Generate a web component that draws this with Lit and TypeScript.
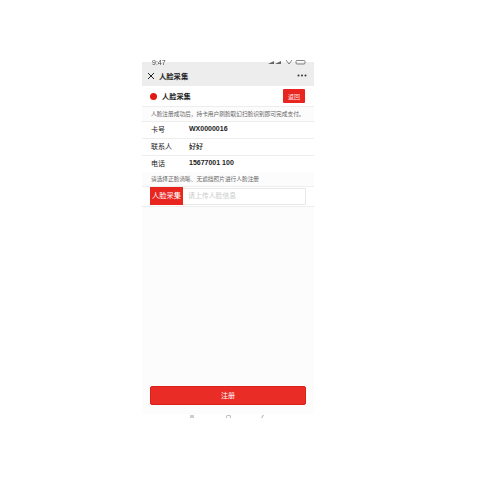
import { LitElement, html, css } from "lit";
import { customElement } from "lit/decorators.js";

@customElement("app-root")
export class AppRoot extends LitElement {
  static styles = css`
    :host {
      display: block;
      width: 480px;
      height: 480px;
      background: #fff;
      padding: 62px 0 0 142px;
      box-sizing: border-box;
      font-family: "Noto Sans CJK SC", "Liberation Sans", sans-serif;
      color: #222;
      overflow: hidden;
    }
    .phone {
      width: 172px;
      height: 356px;
      display: flex;
      flex-direction: column;
      background: #fcfcfc;
      filter: blur(0.3px);
    }
    .status {
      height: 3px;
      background: #ededed;
      position: relative;
      flex: none;
    }
    .time {
      position: absolute;
      left: 10px;
      top: -3px;
      font-size: 7px;
      line-height: 7px;
      color: #444;
      font-family: "Liberation Sans", sans-serif;
    }
    .sig {
      position: absolute;
      right: 8px;
      top: -3px;
      width: 38px;
      height: 6px;
      display: block;
    }
    .nav {
      height: 21px;
      background: #ededed;
      flex: none;
      display: flex;
      align-items: center;
      padding: 0 5px;
      gap: 4px;
      font-size: 7.3px;
      font-weight: 700;
      color: #222;
    }
    .nav svg.x { width: 8px; height: 8px; flex: none; }
    .nav .title { flex: 1; }
    .nav .dots { width: 10px; height: 3px; flex: none; margin-right: 2px; }
    .head {
      height: 21px;
      flex: none;
      background: #fff;
      display: flex;
      align-items: center;
      padding: 0 9px 0 8px;
      font-size: 7.2px;
      font-weight: 700;
      color: #222;
      border-bottom: 1px solid #eee;
      box-sizing: border-box;
    }
    .dot {
      width: 7px;
      height: 7px;
      border-radius: 50%;
      background: #e01a14;
      margin-right: 5px;
      flex: none;
    }
    .head .t { flex: 1; }
    .back {
      width: 22px;
      height: 14px;
      background: #e8261f;
      color: #fde8e6;
      border-radius: 1px;
      font-size: 6px;
      font-weight: 400;
      display: flex;
      align-items: center;
      justify-content: center;
    }
    .note {
      height: 14px;
      flex: none;
      background: #fcfcfc;
      font-size: 5.7px;
      color: #666;
      display: flex;
      align-items: center;
      padding: 0 0 2px 9px;
      box-sizing: border-box;
      white-space: nowrap;
    }
    .row {
      height: 17px;
      flex: none;
      background: #fff;
      border-top: 1px solid #eee;
      box-sizing: border-box;
      display: grid;
      grid-template-columns: 38px 1fr;
      align-items: center;
      padding: 0 0 3px 9px;
      font-size: 7px;
      line-height: 10px;
      color: #222;
    }
    .row .v { font-size: 7px; font-weight: 500; }
    .row .mono { font-family: "Liberation Sans", sans-serif; font-weight: 700; }
    .pick {
      flex: none;
      height: 21px;
      background: #fff;
      border-top: 1px solid #eee;
      border-bottom: 1px solid #eee;
      box-sizing: border-box;
      display: flex;
      align-items: center;
      padding: 0 8px 1px;
    }
    .pick .btn {
      width: 33px;
      height: 18px;
      flex: none;
      background: #e8261f;
      color: #fff;
      font-size: 7.3px;
      padding-bottom: 2px;
      box-sizing: border-box;
      display: flex;
      align-items: center;
      justify-content: center;
      white-space: nowrap;
    }
    .pick .input {
      flex: 1;
      height: 17px;
      border: 1px solid #e8e8e8;
      border-left: none;
      box-sizing: border-box;
      font-size: 6.9px;
      color: #ccc;
      display: flex;
      align-items: center;
      padding: 0 0 2px 5px;
    }
    .fill { flex: 1; }
    .submit {
      flex: none;
      margin: 0 8px;
      height: 19px;
      background: #e92c25;
      border: 1px solid #d9201a;
      border-radius: 2px;
      box-sizing: border-box;
      color: #fff;
      font-size: 7px;
      padding-bottom: 1px;
      display: flex;
      align-items: center;
      justify-content: center;
    }
    .gap { height: 9px; flex: none; }
    .bar {
      flex: none;
      height: 4px;
      background: #fff;
      display: flex;
      justify-content: space-between;
      align-items: flex-end;
      padding: 0 48px;
      box-sizing: border-box;
    }
    .bar span { display: block; width: 4px; height: 3px; background: #ccc; }
    .bar span.o { background: none; border: 1px solid #bbb; border-bottom: none; border-radius: 2px 2px 0 0; box-sizing: border-box; width: 5px; }
    .bar span.c { background: none; width: 3px; border-left: 1px solid #aaa; transform: skewX(-30deg); }
  `;

  render() {
    return html`<div class="phone">
      <div class="status">
        <span class="time">9:47</span>
        <svg class="sig" viewBox="0 0 38 6">
          <path d="M0 5L6 2V5ZM7 5L13 2V5Z" fill="#666"/>
          <path d="M18 1l3 4 3-4" stroke="#666" fill="none" stroke-width="0.8"/>
          <rect x="28" y="1.5" width="9" height="3.5" rx="1" fill="none" stroke="#666" stroke-width="0.8"/>
        </svg>
      </div>
      <div class="nav">
        <svg class="x" viewBox="0 0 8 8"><path d="M1 1l6 6M7 1l-6 6" stroke="#222" stroke-width="1"/></svg>
        <span class="title">人脸采集</span>
        <svg class="dots" viewBox="0 0 10 3"><circle cx="1.5" cy="1.5" r="1" fill="#333"/><circle cx="5" cy="1.5" r="1" fill="#333"/><circle cx="8.5" cy="1.5" r="1" fill="#333"/></svg>
      </div>
      <div class="head">
        <span class="dot"></span><span class="t">人脸采集</span>
        <span class="back">返回</span>
      </div>
      <div class="note">人脸注册成功后，持卡用户刷脸取幻扫脸识别即可完成支付。</div>
      <div class="row"><span>卡号</span><span class="v mono">WX0000016</span></div>
      <div class="row"><span>联系人</span><span class="v">好好</span></div>
      <div class="row"><span>电话</span><span class="v mono">15677001 100</span></div>
      <div class="note">请选择正脸清晰、无遮挡照片进行人脸注册</div>
      <div class="pick">
        <span class="btn">人脸采集</span>
        <span class="input">请上传人脸信息</span>
      </div>
      <div class="fill"></div>
      <div class="submit">注册</div>
      <div class="gap"></div>
      <div class="bar"><span></span><span class="o"></span><span class="c"></span></div>
    </div>`;
  }
}
